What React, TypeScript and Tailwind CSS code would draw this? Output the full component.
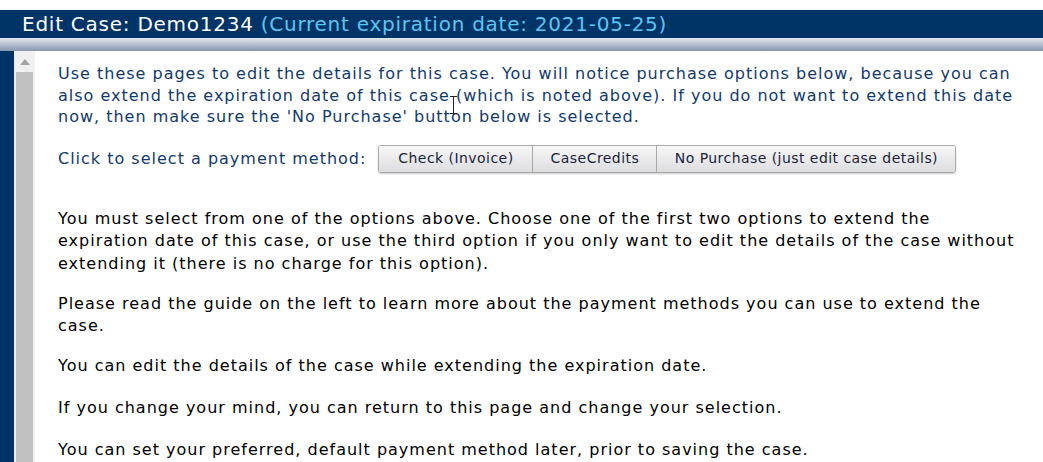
const buttons = [
  { label: "Check (Invoice)", width: "w-[153px]" },
  { label: "CaseCredits", width: "w-[124px]" },
  { label: "No Purchase (just edit case details)", width: "w-[299px]" },
]

export default function App() {
  return (
    <div className="relative w-[1043px] h-[462px] overflow-hidden bg-white font-['Verdana','DejaVu_Sans',sans-serif]">
      <div className="h-[10px]" />

      {/* title bar */}
      <div className="h-[28px] bg-[#003366] pl-[22px] flex items-center text-[20px] leading-none tracking-[0.75px] whitespace-nowrap">
        <span className="text-white">Edit Case: Demo1234</span>
        <span className="ml-[7px] text-[#5bc6f4]">(Current expiration date: 2021-05-25)</span>
      </div>
      <div className="h-[13px] bg-gradient-to-b from-[#e4e8ee] to-[#8797ae]" />

      <div className="flex h-[411px]">
        <div className="w-[14px] bg-[#003366]" />

        {/* scrollbar */}
        <div className="w-[21px] bg-[#f0f0f0] flex flex-col items-center pt-[6px]">
          <svg width="10" height="6" viewBox="0 0 10 6" className="mt-[2px]">
            <polygon points="5,0 10,6 0,6" fill="#a3a3a3" />
          </svg>
          <div className="mt-[7px] w-[17px] flex-1 bg-[#c1c1c1]" />
        </div>

        {/* content */}
        <div className="flex-1 pl-[23px] pr-[20px] pt-[12px] text-[16px] leading-[21.5px] tracking-[1px] text-black">
          <p className="text-[#123a6a]">
            Use these pages to edit the details for this case. You will notice purchase options below, because you can
            also extend the expiration date of this case (which is noted above). If you do not want to extend this date
            now, then make sure the 'No Purchase' button below is selected.
          </p>

          <div className="mt-[17px] flex items-center text-[#123a6a]">
            <span>Click to select a payment method:</span>
            <div className="ml-[12px] flex h-[28px] rounded-[3px] border border-[#a9a9a9] shadow-[0_1px_2px_rgba(0,0,0,0.2)] overflow-hidden text-[14px] tracking-[0.45px]">
              {buttons.map((b, i) => (
                <div
                  key={b.label}
                  className={`${b.width} flex items-center justify-center bg-gradient-to-b from-[#f7f7f7] to-[#dddde0] text-[#1a1f3a] ${
                    i > 0 ? "border-l border-[#a9a9a9]" : ""
                  }`}
                >
                  {b.label}
                </div>
              ))}
            </div>
          </div>

          <p className="mt-[35px] leading-[22.5px]">
            You must select from one of the options above. Choose one of the first two options to extend the
            expiration date of this case, or use the third option if you only want to edit the details of the case without
            extending it (there is no charge for this option).
          </p>
          <p className="mt-[18px] leading-[22px]">
            Please read the guide on the left to learn more about the payment methods you can use to extend the
            case.
          </p>
          <p className="mt-[18px] leading-[22px]">You can edit the details of the case while extending the expiration date.</p>
          <p className="mt-[20px] leading-[22px]">
            If you change your mind, you can return to this page and change your selection.
          </p>
          <p className="mt-[20px] leading-[22px]">
            You can set your preferred, default payment method later, prior to saving the case.
          </p>
        </div>
      </div>

      {/* mouse text cursor */}
      <svg width="9" height="18" viewBox="0 0 9 18" className="absolute left-[449px] top-[96px]">
        <path d="M1 0.5h7M4.5 0.5v17M1 17.5h7" stroke="#222" strokeWidth="1" fill="none" />
      </svg>
    </div>
  )
}
